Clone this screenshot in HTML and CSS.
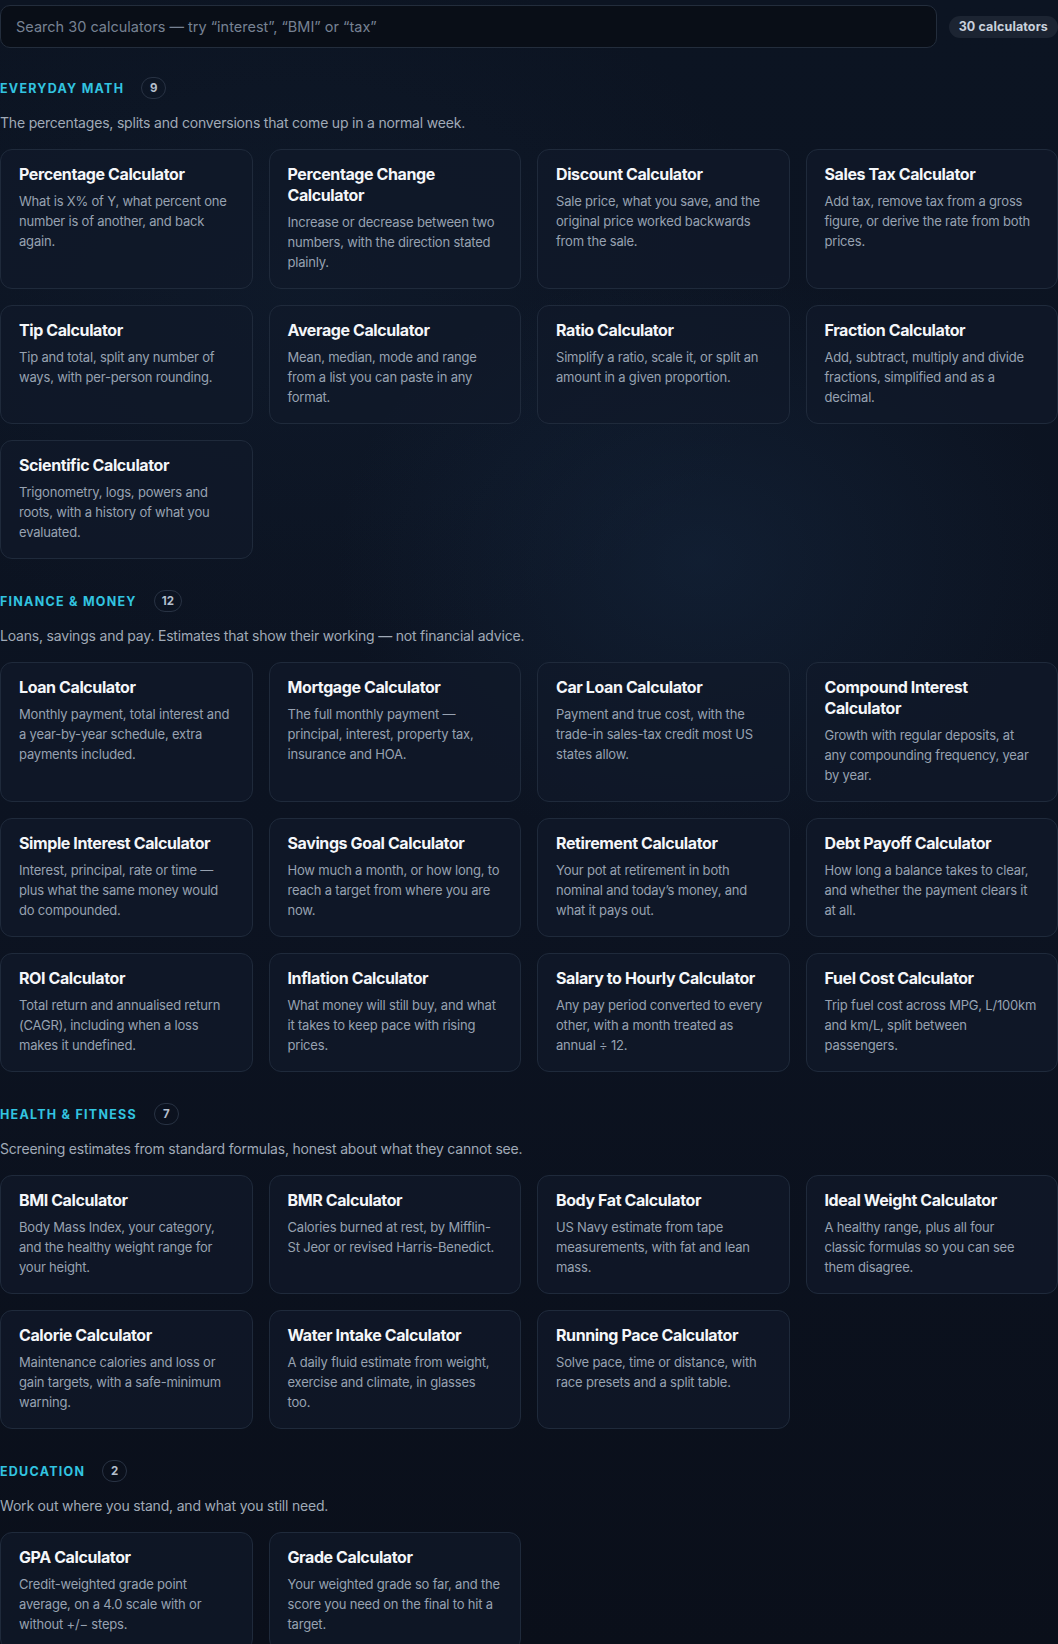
FILE: index.html
```html
<!DOCTYPE html>
<html lang="en">
<head>
<meta charset="utf-8">
<title>Calculators</title>
<link rel="stylesheet" href="styles.css">
</head>
<body>
<main class="page">
  <div class="search-row">
    <div class="search">Search 30 calculators — try “interest”, “BMI” or “tax”</div>
    <span class="count-pill">30 calculators</span>
  </div>

  <section class="group">
    <div class="group-head"><h2 class="group-title">Everyday Math</h2><span class="badge">9</span></div>
    <p class="group-desc">The percentages, splits and conversions that come up in a normal week.</p>
    <div class="grid">
      <a class="card"><h3>Percentage Calculator</h3><p>What is X% of Y, what percent one number is of another, and back again.</p></a>
      <a class="card"><h3>Percentage Change Calculator</h3><p>Increase or decrease between two numbers, with the direction stated plainly.</p></a>
      <a class="card"><h3>Discount Calculator</h3><p>Sale price, what you save, and the original price worked backwards from the sale.</p></a>
      <a class="card"><h3>Sales Tax Calculator</h3><p>Add tax, remove tax from a gross figure, or derive the rate from both prices.</p></a>
      <a class="card"><h3>Tip Calculator</h3><p>Tip and total, split any number of ways, with per-person rounding.</p></a>
      <a class="card"><h3>Average Calculator</h3><p>Mean, median, mode and range from a list you can paste in any format.</p></a>
      <a class="card"><h3>Ratio Calculator</h3><p>Simplify a ratio, scale it, or split an amount in a given proportion.</p></a>
      <a class="card"><h3>Fraction Calculator</h3><p>Add, subtract, multiply and divide fractions, simplified and as a decimal.</p></a>
      <a class="card"><h3>Scientific Calculator</h3><p>Trigonometry, logs, powers and roots, with a history of what you evaluated.</p></a>
    </div>
  </section>

  <section class="group">
    <div class="group-head"><h2 class="group-title">Finance &amp; Money</h2><span class="badge">12</span></div>
    <p class="group-desc">Loans, savings and pay. Estimates that show their working — not financial advice.</p>
    <div class="grid">
      <a class="card"><h3>Loan Calculator</h3><p>Monthly payment, total interest and a year-by-year schedule, extra payments included.</p></a>
      <a class="card"><h3>Mortgage Calculator</h3><p>The full monthly payment — principal, interest, property tax, insurance and HOA.</p></a>
      <a class="card"><h3>Car Loan Calculator</h3><p>Payment and true cost, with the trade-in sales-tax credit most US states allow.</p></a>
      <a class="card"><h3>Compound Interest Calculator</h3><p>Growth with regular deposits, at any compounding frequency, year by year.</p></a>
      <a class="card"><h3>Simple Interest Calculator</h3><p>Interest, principal, rate or time — plus what the same money would do compounded.</p></a>
      <a class="card"><h3>Savings Goal Calculator</h3><p>How much a month, or how long, to reach a target from where you are now.</p></a>
      <a class="card"><h3>Retirement Calculator</h3><p>Your pot at retirement in both nominal and today’s money, and what it pays out.</p></a>
      <a class="card"><h3>Debt Payoff Calculator</h3><p>How long a balance takes to clear, and whether the payment clears it at all.</p></a>
      <a class="card"><h3>ROI Calculator</h3><p>Total return and annualised return (CAGR), including when a loss makes it undefined.</p></a>
      <a class="card"><h3>Inflation Calculator</h3><p>What money will still buy, and what it takes to keep pace with rising prices.</p></a>
      <a class="card"><h3>Salary to Hourly Calculator</h3><p>Any pay period converted to every other, with a month treated as annual ÷ 12.</p></a>
      <a class="card"><h3>Fuel Cost Calculator</h3><p>Trip fuel cost across MPG, L/100km and km/L, split between passengers.</p></a>
    </div>
  </section>

  <section class="group">
    <div class="group-head"><h2 class="group-title">Health &amp; Fitness</h2><span class="badge">7</span></div>
    <p class="group-desc">Screening estimates from standard formulas, honest about what they cannot see.</p>
    <div class="grid">
      <a class="card"><h3>BMI Calculator</h3><p>Body Mass Index, your category, and the healthy weight range for your height.</p></a>
      <a class="card"><h3>BMR Calculator</h3><p>Calories burned at rest, by Mifflin-St Jeor or revised Harris-Benedict.</p></a>
      <a class="card"><h3>Body Fat Calculator</h3><p>US Navy estimate from tape measurements, with fat and lean mass.</p></a>
      <a class="card"><h3>Ideal Weight Calculator</h3><p>A healthy range, plus all four classic formulas so you can see them disagree.</p></a>
      <a class="card"><h3>Calorie Calculator</h3><p>Maintenance calories and loss or gain targets, with a safe-minimum warning.</p></a>
      <a class="card"><h3>Water Intake Calculator</h3><p>A daily fluid estimate from weight, exercise and climate, in glasses too.</p></a>
      <a class="card"><h3>Running Pace Calculator</h3><p>Solve pace, time or distance, with race presets and a split table.</p></a>
    </div>
  </section>

  <section class="group">
    <div class="group-head"><h2 class="group-title">Education</h2><span class="badge">2</span></div>
    <p class="group-desc">Work out where you stand, and what you still need.</p>
    <div class="grid">
      <a class="card"><h3>GPA Calculator</h3><p>Credit-weighted grade point average, on a 4.0 scale with or without +/− steps.</p></a>
      <a class="card"><h3>Grade Calculator</h3><p>Your weighted grade so far, and the score you need on the final to hit a target.</p></a>
    </div>
  </section>
</main>
</body>
</html>
```
FILE: styles.css
```css
html, body {
  margin: 0;
  padding: 0;
}
body {
  background-color: #0b111c;
  background-image:
    radial-gradient(ellipse 520px 420px at 700px 560px, rgba(30, 58, 92, 0.28), rgba(30, 58, 92, 0) 70%),
    radial-gradient(ellipse 700px 500px at 300px 300px, rgba(22, 40, 64, 0.25), rgba(22, 40, 64, 0) 70%),
    linear-gradient(180deg, #0c1422 0%, #0c1321 55%, #0a0f1a 100%);
  font-family: Inter, "Noto Sans", "Liberation Sans", sans-serif;
  color: #e5e9f0;
  min-height: 1644px;
}
.page {
  width: 1058px;
  padding-top: 5px;
}
.search-row {
  display: flex;
  align-items: center;
  gap: 12px;
}
.search {
  flex: 1;
  box-sizing: border-box;
  height: 43px;
  border: 1px solid #232d3c;
  border-radius: 10px;
  background: #090e17;
  padding: 0 15px;
  display: flex;
  align-items: center;
  font-size: 14.5px;
  color: #778293;
}
.count-pill {
  height: 22px;
  line-height: 22px;
  padding: 0 10px;
  border-radius: 11px;
  background: #1c2432;
  color: #c9d1dc;
  font-size: 12.5px;
  font-weight: 700;
  letter-spacing: 0.01em;
  white-space: nowrap;
}
.group {
  margin-top: 29px;
}
.group + .group {
  margin-top: 31px;
}
.group-head {
  display: flex;
  align-items: center;
  gap: 17px;
  height: 22px;
}
.group-title {
  margin: 0;
  font-size: 12.5px;
  font-weight: 700;
  letter-spacing: 0.1em;
  text-transform: uppercase;
  color: #32c4e0;
}
.badge {
  box-sizing: border-box;
  height: 22px;
  min-width: 25px;
  padding: 0 7px;
  border: 1px solid #283243;
  border-radius: 11px;
  display: inline-flex;
  align-items: center;
  justify-content: center;
  font-size: 11.5px;
  font-weight: 700;
  color: #b4bfcc;
}
.group-desc {
  margin: 14px 0 16px;
  font-size: 14px;
  line-height: 20px;
  letter-spacing: -0.014em;
  color: #a0aab7;
}
.grid {
  display: grid;
  grid-template-columns: repeat(4, 1fr);
  gap: 16px;
}
.card {
  display: block;
  box-sizing: border-box;
  padding: 14px 19px 16px 18px;
  border: 1px solid #1f2a3b;
  border-radius: 12px;
  background: rgba(16, 25, 41, 0.72);
  text-decoration: none;
}
.card h3 {
  margin: 0 0 6px;
  font-size: 16px;
  line-height: 21px;
  font-weight: 700;
  letter-spacing: -0.025em;
  color: #f4f6f9;
}
.card p {
  margin: 0;
  font-size: 13px;
  line-height: 20px;
  color: #97a2b1;
  letter-spacing: -0.015em;
}
```
